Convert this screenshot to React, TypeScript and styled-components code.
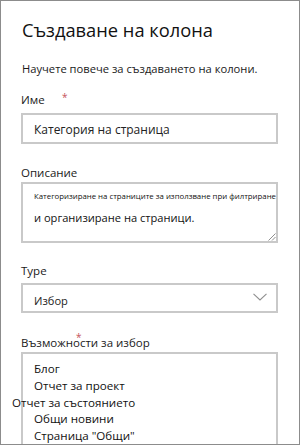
import React from "react";
import styled, { createGlobalStyle } from "styled-components";

const Global = createGlobalStyle`
  html, body { margin: 0; padding: 0; background: #fff; }
  body { font-family: "Open Sans", "Noto Sans", sans-serif; color: #1f1f1f; }
  * { box-sizing: border-box; }
`;

const Panel = styled.div`
  width: 300px;
  height: 445px;
  border: 1px solid #8c8c8c;
  padding: 0 21px 0 20px;
  overflow: hidden;
  display: flex;
  flex-direction: column;
`;

const Title = styled.h1`
  margin: 16px 0 0 1px;
  font-size: 18.3px;
  font-weight: 400;
  line-height: 26px;
  color: #111;
  white-space: nowrap;
`;

const Intro = styled.p`
  margin: 19px 0 0 1px;
  font-size: 11.2px;
  line-height: 14px;
  color: #1a1a1a;
  white-space: nowrap;
`;

const Field = styled.div<{ $gap: number }>`
  margin-top: ${(p) => p.$gap}px;
  display: flex;
  flex-direction: column;
`;

const Label = styled.div<{ $mb: number }>`
  position: relative;
  margin-bottom: ${(p) => p.$mb}px;
  font-size: 11.5px;
  line-height: 16px;
  color: #1a1a1a;
  white-space: nowrap;
`;

const Star = styled.span<{ $left: number; $top: number }>`
  position: absolute;
  left: ${(p) => p.$left}px;
  top: ${(p) => p.$top}px;
  color: #c4525a;
  font-size: 10px;
  line-height: 10px;
`;

const Box = styled.div<{ $h: number }>`
  position: relative;
  height: ${(p) => p.$h}px;
  border: 2px solid #c9c9c9;
  background: #fff;
  display: flex;
  flex-direction: column;
`;

const InputText = styled.div`
  padding: 8px 0 0 11px;
  font-size: 12px;
  line-height: 14px;
  color: #222;
  white-space: nowrap;
`;

const TinyLine = styled.div`
  padding: 7px 0 0 11px;
  font-size: 7.8px;
  line-height: 10px;
  text-align: justify;
  text-align-last: justify;
  color: #111;
  white-space: nowrap;
`;

const BigLine = styled.div`
  padding: 9px 0 0 11px;
  font-size: 11.1px;
  line-height: 16px;
  color: #111;
  white-space: nowrap;
`;

const Grip = styled.svg`
  position: absolute;
  right: 0;
  bottom: 0;
`;

const SelectRow = styled.div`
  display: flex;
  align-items: flex-start;
  justify-content: space-between;
  padding: 8px 9px 0 11px;
  font-size: 11.1px;
  line-height: 16px;
  color: #222;
`;

const List = styled.div`
  padding: 7px 0 0 11px;
  display: flex;
  flex-direction: column;
`;

const Item = styled.div<{ $shift?: number }>`
  margin-left: ${(p) => p.$shift ?? 0}px;
  font-size: 11.6px;
  line-height: 16.75px;
  color: #111;
  white-space: nowrap;
`;

export default function App() {
  return (
    <>
      <Global />
      <Panel>
        <Title>Създаване на колона</Title>
        <Intro>Научете повече за създаването на колони.</Intro>

        <Field $gap={16}>
          <Label $mb={5}>
            Име<Star $left={41} $top={0}>*</Star>
          </Label>
          <Box $h={31}>
            <InputText>Категория на страница</InputText>
          </Box>
        </Field>

        <Field $gap={21}>
          <Label $mb={1}>Описание</Label>
          <Box $h={61}>
            <TinyLine>Категоризиране на страниците за използване при филтриране</TinyLine>
            <BigLine>и организиране на страници.</BigLine>
            <Grip width="8" height="8" viewBox="0 0 8 8">
              <path d="M7.5 0.5 L0.5 7.5 M7.5 4 L4 7.5" stroke="#8f8f8f" strokeWidth="1" fill="none" />
            </Grip>
          </Box>
        </Field>

        <Field $gap={20}>
          <Label $mb={4}>Type</Label>
          <Box $h={30}>
            <SelectRow>
              <span>Избор</span>
              <svg width="14" height="8" viewBox="0 0 14 8">
                <path d="M0.5 0.8 L7 7 L13.5 0.8" stroke="#8f8f8f" strokeWidth="1.1" fill="none" />
              </svg>
            </SelectRow>
          </Box>
        </Field>

        <Field $gap={22}>
          <Label $mb={1}>
            Възможности за избор<Star $left={55} $top={-3}>*</Star>
          </Label>
          <Box $h={120}>
            <List>
              <Item>Блог</Item>
              <Item>Отчет за проект</Item>
              <Item $shift={-22}>Отчет за състоянието</Item>
              <Item>Общи новини</Item>
              <Item>Страница "Общи"</Item>
            </List>
          </Box>
        </Field>
      </Panel>
    </>
  );
}
